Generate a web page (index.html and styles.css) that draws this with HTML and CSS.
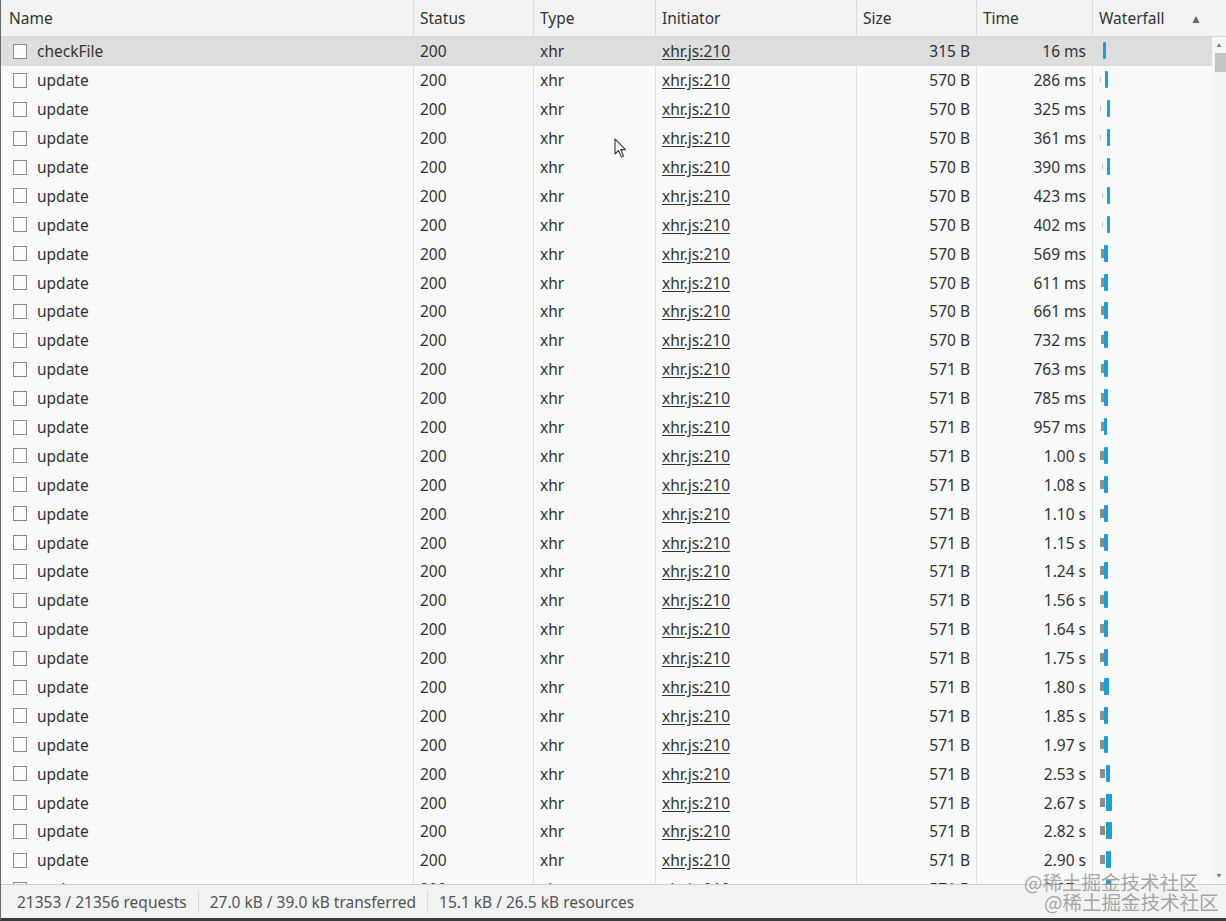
FILE: index.html
```html
<!DOCTYPE html>
<html>
<head>
<meta charset="utf-8">
<link rel="stylesheet" href="styles.css">
</head>
<body>
<div class="window">
  <div class="main">
    <div class="grid">
      <div class="row head">
        <div class="c name">Name</div>
        <div class="c">Status</div>
        <div class="c">Type</div>
        <div class="c">Initiator</div>
        <div class="c">Size</div>
        <div class="c">Time</div>
        <div class="c wf-h">Waterfall<span class="sort">▲</span></div>
      </div>
      <div class="rows" id="rows">
        <div class="row sel"><div class="c name"><span class="cb"></span>checkFile</div><div class="c">200</div><div class="c">xhr</div><div class="c"><span class="link">xhr.js:210</span></div><div class="c r">315 B</div><div class="c r">16 ms</div><div class="c wf"><i class="b" style="left:10px;width:3px"></i></div></div>
        <div class="row"><div class="c name"><span class="cb"></span>update</div><div class="c">200</div><div class="c">xhr</div><div class="c"><span class="link">xhr.js:210</span></div><div class="c r">570 B</div><div class="c r">286 ms</div><div class="c wf"><i class="g t" style="left:7px;width:1px"></i><i class="b" style="left:12px;width:3px"></i></div></div>
        <div class="row"><div class="c name"><span class="cb"></span>update</div><div class="c">200</div><div class="c">xhr</div><div class="c"><span class="link">xhr.js:210</span></div><div class="c r">570 B</div><div class="c r">325 ms</div><div class="c wf"><i class="g t" style="left:7px;width:1px"></i><i class="b" style="left:14px;width:3px"></i></div></div>
        <div class="row"><div class="c name"><span class="cb"></span>update</div><div class="c">200</div><div class="c">xhr</div><div class="c"><span class="link">xhr.js:210</span></div><div class="c r">570 B</div><div class="c r">361 ms</div><div class="c wf"><i class="g t" style="left:7px;width:1px"></i><i class="b" style="left:14px;width:3px"></i></div></div>
        <div class="row"><div class="c name"><span class="cb"></span>update</div><div class="c">200</div><div class="c">xhr</div><div class="c"><span class="link">xhr.js:210</span></div><div class="c r">570 B</div><div class="c r">390 ms</div><div class="c wf"><i class="g t" style="left:9px;width:1px"></i><i class="b" style="left:14px;width:3px"></i></div></div>
        <div class="row"><div class="c name"><span class="cb"></span>update</div><div class="c">200</div><div class="c">xhr</div><div class="c"><span class="link">xhr.js:210</span></div><div class="c r">570 B</div><div class="c r">423 ms</div><div class="c wf"><i class="g t" style="left:9px;width:1px"></i><i class="b" style="left:14px;width:3px"></i></div></div>
        <div class="row"><div class="c name"><span class="cb"></span>update</div><div class="c">200</div><div class="c">xhr</div><div class="c"><span class="link">xhr.js:210</span></div><div class="c r">570 B</div><div class="c r">402 ms</div><div class="c wf"><i class="g t" style="left:9px;width:1px"></i><i class="b" style="left:14px;width:3px"></i></div></div>
        <div class="row"><div class="c name"><span class="cb"></span>update</div><div class="c">200</div><div class="c">xhr</div><div class="c"><span class="link">xhr.js:210</span></div><div class="c r">570 B</div><div class="c r">569 ms</div><div class="c wf"><i class="g" style="left:8px;width:3px"></i><i class="b" style="left:11px;width:4px"></i></div></div>
        <div class="row"><div class="c name"><span class="cb"></span>update</div><div class="c">200</div><div class="c">xhr</div><div class="c"><span class="link">xhr.js:210</span></div><div class="c r">570 B</div><div class="c r">611 ms</div><div class="c wf"><i class="g" style="left:8px;width:3px"></i><i class="b" style="left:11px;width:4px"></i></div></div>
        <div class="row"><div class="c name"><span class="cb"></span>update</div><div class="c">200</div><div class="c">xhr</div><div class="c"><span class="link">xhr.js:210</span></div><div class="c r">570 B</div><div class="c r">661 ms</div><div class="c wf"><i class="g" style="left:8px;width:3px"></i><i class="b" style="left:11px;width:4px"></i></div></div>
        <div class="row"><div class="c name"><span class="cb"></span>update</div><div class="c">200</div><div class="c">xhr</div><div class="c"><span class="link">xhr.js:210</span></div><div class="c r">570 B</div><div class="c r">732 ms</div><div class="c wf"><i class="g" style="left:8px;width:3px"></i><i class="b" style="left:11px;width:4px"></i></div></div>
        <div class="row"><div class="c name"><span class="cb"></span>update</div><div class="c">200</div><div class="c">xhr</div><div class="c"><span class="link">xhr.js:210</span></div><div class="c r">571 B</div><div class="c r">763 ms</div><div class="c wf"><i class="g" style="left:8px;width:3px"></i><i class="b" style="left:11px;width:4px"></i></div></div>
        <div class="row"><div class="c name"><span class="cb"></span>update</div><div class="c">200</div><div class="c">xhr</div><div class="c"><span class="link">xhr.js:210</span></div><div class="c r">571 B</div><div class="c r">785 ms</div><div class="c wf"><i class="g" style="left:8px;width:3px"></i><i class="b" style="left:11px;width:4px"></i></div></div>
        <div class="row"><div class="c name"><span class="cb"></span>update</div><div class="c">200</div><div class="c">xhr</div><div class="c"><span class="link">xhr.js:210</span></div><div class="c r">571 B</div><div class="c r">957 ms</div><div class="c wf"><i class="g" style="left:8px;width:3px"></i><i class="b" style="left:11px;width:3px"></i></div></div>
        <div class="row"><div class="c name"><span class="cb"></span>update</div><div class="c">200</div><div class="c">xhr</div><div class="c"><span class="link">xhr.js:210</span></div><div class="c r">571 B</div><div class="c r">1.00 s</div><div class="c wf"><i class="g" style="left:7px;width:4px"></i><i class="b" style="left:11px;width:4px"></i></div></div>
        <div class="row"><div class="c name"><span class="cb"></span>update</div><div class="c">200</div><div class="c">xhr</div><div class="c"><span class="link">xhr.js:210</span></div><div class="c r">571 B</div><div class="c r">1.08 s</div><div class="c wf"><i class="g" style="left:7px;width:4px"></i><i class="b" style="left:11px;width:4px"></i></div></div>
        <div class="row"><div class="c name"><span class="cb"></span>update</div><div class="c">200</div><div class="c">xhr</div><div class="c"><span class="link">xhr.js:210</span></div><div class="c r">571 B</div><div class="c r">1.10 s</div><div class="c wf"><i class="g" style="left:7px;width:4px"></i><i class="b" style="left:11px;width:4px"></i></div></div>
        <div class="row"><div class="c name"><span class="cb"></span>update</div><div class="c">200</div><div class="c">xhr</div><div class="c"><span class="link">xhr.js:210</span></div><div class="c r">571 B</div><div class="c r">1.15 s</div><div class="c wf"><i class="g" style="left:7px;width:4px"></i><i class="b" style="left:11px;width:4px"></i></div></div>
        <div class="row"><div class="c name"><span class="cb"></span>update</div><div class="c">200</div><div class="c">xhr</div><div class="c"><span class="link">xhr.js:210</span></div><div class="c r">571 B</div><div class="c r">1.24 s</div><div class="c wf"><i class="g" style="left:7px;width:4px"></i><i class="b" style="left:11px;width:4px"></i></div></div>
        <div class="row"><div class="c name"><span class="cb"></span>update</div><div class="c">200</div><div class="c">xhr</div><div class="c"><span class="link">xhr.js:210</span></div><div class="c r">571 B</div><div class="c r">1.56 s</div><div class="c wf"><i class="g" style="left:7px;width:4px"></i><i class="b" style="left:11px;width:4px"></i></div></div>
        <div class="row"><div class="c name"><span class="cb"></span>update</div><div class="c">200</div><div class="c">xhr</div><div class="c"><span class="link">xhr.js:210</span></div><div class="c r">571 B</div><div class="c r">1.64 s</div><div class="c wf"><i class="g" style="left:7px;width:4px"></i><i class="b" style="left:11px;width:4px"></i></div></div>
        <div class="row"><div class="c name"><span class="cb"></span>update</div><div class="c">200</div><div class="c">xhr</div><div class="c"><span class="link">xhr.js:210</span></div><div class="c r">571 B</div><div class="c r">1.75 s</div><div class="c wf"><i class="g" style="left:7px;width:4px"></i><i class="b" style="left:11px;width:4px"></i></div></div>
        <div class="row"><div class="c name"><span class="cb"></span>update</div><div class="c">200</div><div class="c">xhr</div><div class="c"><span class="link">xhr.js:210</span></div><div class="c r">571 B</div><div class="c r">1.80 s</div><div class="c wf"><i class="g" style="left:7px;width:4px"></i><i class="b" style="left:11px;width:5px"></i></div></div>
        <div class="row"><div class="c name"><span class="cb"></span>update</div><div class="c">200</div><div class="c">xhr</div><div class="c"><span class="link">xhr.js:210</span></div><div class="c r">571 B</div><div class="c r">1.85 s</div><div class="c wf"><i class="g" style="left:7px;width:4px"></i><i class="b" style="left:11px;width:4px"></i></div></div>
        <div class="row"><div class="c name"><span class="cb"></span>update</div><div class="c">200</div><div class="c">xhr</div><div class="c"><span class="link">xhr.js:210</span></div><div class="c r">571 B</div><div class="c r">1.97 s</div><div class="c wf"><i class="g" style="left:7px;width:4px"></i><i class="b" style="left:11px;width:4px"></i></div></div>
        <div class="row"><div class="c name"><span class="cb"></span>update</div><div class="c">200</div><div class="c">xhr</div><div class="c"><span class="link">xhr.js:210</span></div><div class="c r">571 B</div><div class="c r">2.53 s</div><div class="c wf"><i class="g" style="left:7px;width:5px"></i><i class="b" style="left:13px;width:4px"></i></div></div>
        <div class="row"><div class="c name"><span class="cb"></span>update</div><div class="c">200</div><div class="c">xhr</div><div class="c"><span class="link">xhr.js:210</span></div><div class="c r">571 B</div><div class="c r">2.67 s</div><div class="c wf"><i class="g" style="left:7px;width:5px"></i><i class="b" style="left:13px;width:6px"></i></div></div>
        <div class="row"><div class="c name"><span class="cb"></span>update</div><div class="c">200</div><div class="c">xhr</div><div class="c"><span class="link">xhr.js:210</span></div><div class="c r">571 B</div><div class="c r">2.82 s</div><div class="c wf"><i class="g" style="left:7px;width:5px"></i><i class="gr" style="left:13px;width:2px"></i><i class="b" style="left:15px;width:4px"></i></div></div>
        <div class="row"><div class="c name"><span class="cb"></span>update</div><div class="c">200</div><div class="c">xhr</div><div class="c"><span class="link">xhr.js:210</span></div><div class="c r">571 B</div><div class="c r">2.90 s</div><div class="c wf"><i class="g" style="left:7px;width:5px"></i><i class="b" style="left:13px;width:5px"></i></div></div>
        <div class="row"><div class="c name"><span class="cb"></span>update</div><div class="c">200</div><div class="c">xhr</div><div class="c"><span class="link">xhr.js:210</span></div><div class="c r">571 B</div><div class="c r">2.97 s</div><div class="c wf"><i class="g" style="left:7px;width:5px"></i><i class="b" style="left:13px;width:5px"></i></div></div>
      </div>
    </div>
    <div class="scroll">
      <div class="sb-head"></div>
      <div class="sb-track">
        <span class="arr up">▲</span>
        <span class="thumb"></span>
        <span class="fill"></span>
        <span class="arr down">▼</span>
      </div>
    </div>
  </div>
  <div class="status">
    <span class="st">21353 / 21356 requests</span>
    <span class="st">27.0 kB / 39.0 kB transferred</span>
    <span class="st">15.1 kB / 26.5 kB resources</span>
  </div>
  <div class="watermark">
    <span class="w1">@稀土掘金技术社区</span>
    <span class="w2">@稀土掘金技术社区</span>
  </div>
  <svg class="cursor" width="14" height="22" viewBox="0 0 14 22"><path d="M1 1 L1 16 L4.5 12.5 L7.5 19 L9.5 18 L6.7 11.6 L11.5 11.6 Z" fill="#fff" stroke="#444" stroke-width="1.2" stroke-linejoin="round"/></svg>
</div>
</body>
</html>
```
FILE: styles.css
```css
html, body {
  margin: 0;
  padding: 0;
}
body {
  width: 1226px;
  height: 921px;
  overflow: hidden;
  background: #f8f9f9;
  font-family: "Noto Sans", "Open Sans", sans-serif;
  font-size: 15.5px;
  color: #333;
}
.window {
  position: relative;
  width: 1226px;
  height: 921px;
  display: flex;
  flex-direction: column;
  box-sizing: border-box;
  border-left: 1px solid #6a6a6a;
  border-bottom: 3px solid #3c3c3c;
}
.main {
  flex: 1;
  display: flex;
  overflow: hidden;
  min-height: 0;
}
.grid {
  width: 1211px;
  display: flex;
  flex-direction: column;
  overflow: hidden;
}
.row {
  display: grid;
  grid-template-columns: 413px 120px 122px 201px 120px 116px 119px;
  height: 28.9px;
  align-items: stretch;
  flex-shrink: 0;
}
.row.head {
  height: 37px;
  background: #f1f3f3;
  border-bottom: 1px solid #d6d8d8;
  box-sizing: border-box;
}
.row.sel {
  background: #dcdddd;
}
.c {
  display: flex;
  align-items: center;
  padding: 0 6px;
  border-right: 1px solid #dfe1e1;
  white-space: nowrap;
  overflow: hidden;
  position: relative;
}
.head .c {
  border-right-color: #d9dbdb;
}
.c.name {
  padding-left: 8px;
}
.c.r {
  justify-content: flex-end;
}
.c.wf {
  border-right: none;
}
.wf-h {
  border-right: none !important;
  justify-content: space-between;
}
.sort {
  font-size: 12px;
  color: #666;
  margin-right: 4px;
}
.cb {
  width: 12px;
  height: 13px;
  border: 1px solid #8a8a8a;
  background: #fcfcfc;
  margin-left: 4px;
  margin-right: 10px;
  flex-shrink: 0;
}
.link {
  text-decoration: underline;
  text-underline-offset: 2px;
}
.wf i {
  position: absolute;
  top: 50%;
  display: block;
}
.wf i.b {
  height: 17px;
  margin-top: -9px;
  background: #1a9fdc;
  border-radius: 1px;
}
.wf i.gr {
  height: 17px;
  margin-top: -9px;
  background: #2aa876;
}
.wf i.g {
  height: 9px;
  margin-top: -5px;
  background: #8d8d8d;
}
.wf i.g.t {
  height: 5px;
  margin-top: -3px;
  background: #c4c4c4;
}
.scroll {
  width: 14px;
  display: flex;
  flex-direction: column;
}
.sb-head {
  height: 37px;
  background: #f1f3f3;
  border-bottom: 1px solid #d6d8d8;
  box-sizing: border-box;
}
.sb-track {
  flex: 1;
  display: flex;
  flex-direction: column;
  align-items: center;
  background: #f4f5f5;
}
.arr {
  font-size: 7px;
  color: #777;
  height: 16px;
  line-height: 16px;
}
.thumb {
  width: 11px;
  height: 19px;
  background: #c4c4c4;
  margin-left: 2px;
}
.fill {
  flex: 1;
}
.status {
  height: 33px;
  flex-shrink: 0;
  background: #f1f2f2;
  border-top: 1px solid #cfd1d1;
  display: flex;
  align-items: center;
  padding-left: 5px;
  color: #555;
  font-size: 15.5px;
}
.st {
  padding: 0 11px;
  border-right: 1px solid #d8d8d8;
  line-height: 22px;
}
.st:last-child {
  border-right: none;
}
.watermark {
  position: absolute;
  right: 0;
  bottom: 0;
  width: 230px;
  height: 50px;
  font-family: "Noto Sans CJK SC", sans-serif;
  font-size: 19.5px;
  color: rgba(140, 140, 140, 0.75);
  pointer-events: none;
}
.watermark span {
  position: absolute;
  white-space: nowrap;
}
.w1 { left: 28px; top: -1px; }
.w2 { left: 48px; top: 19px; }
.cursor {
  position: absolute;
  left: 613px;
  top: 138px;
}
```
